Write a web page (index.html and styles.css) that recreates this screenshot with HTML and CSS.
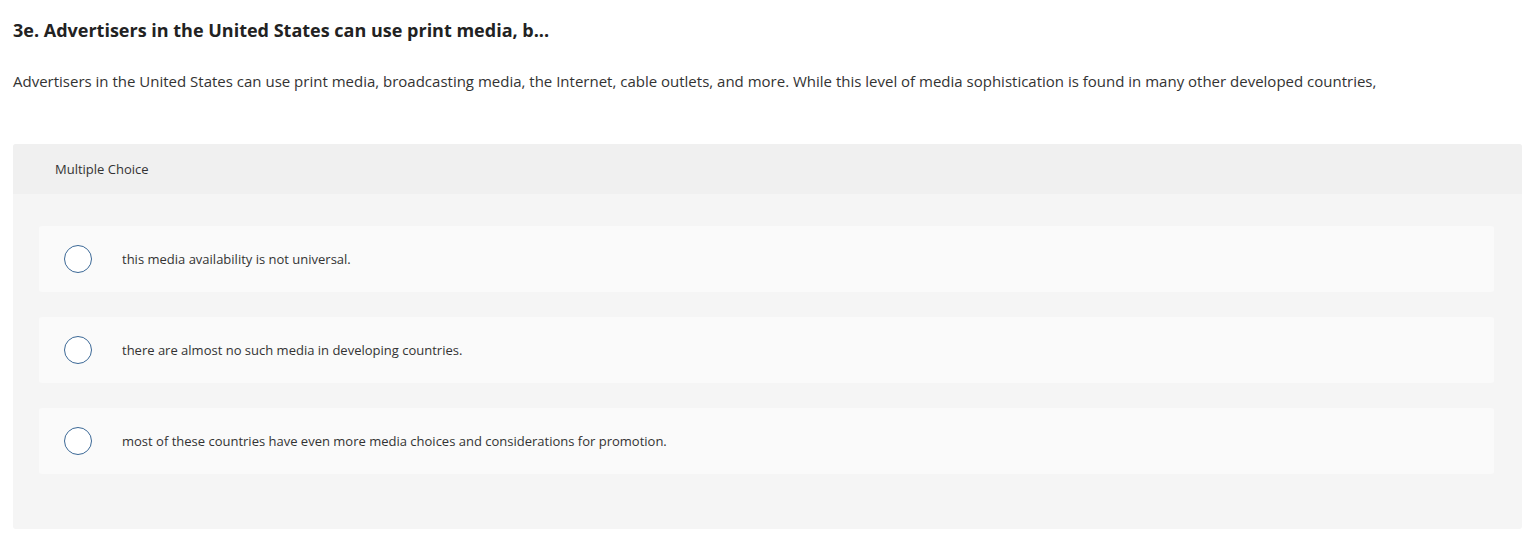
FILE: index.html
```html
<!DOCTYPE html>
<html lang="en">
<head>
    <meta charset="UTF-8">
    <meta name="viewport" content="width=device-width, initial-scale=1.0">
    <title>Question 3e</title>
    <link rel="stylesheet" href="styles.css">
</head>
<body>
    <div class="question">
        <h2 class="title">3e. Advertisers in the United States can use print media, b...</h2>
        <p class="prompt">Advertisers in the United States can use print media, broadcasting media, the Internet, cable outlets, and more. While this level of media sophistication is found in many other developed countries,</p>

        <div class="panel">
            <div class="panel-head">Multiple Choice</div>
            <div class="panel-body">
                <div class="option">
                    <span class="radio"></span>
                    <span class="label">this media availability is not universal.</span>
                </div>
                <div class="option">
                    <span class="radio"></span>
                    <span class="label">there are almost no such media in developing countries.</span>
                </div>
                <div class="option">
                    <span class="radio"></span>
                    <span class="label">most of these countries have even more media choices and considerations for promotion.</span>
                </div>
            </div>
        </div>
    </div>
</body>
</html>
```

FILE: styles.css
```css
* {
    box-sizing: border-box;
}
body {
    margin: 0;
    background: #fff;
    font-family: "Open Sans", Lato, sans-serif;
    color: #333;
}
.question {
    padding: 0 9px 0 13px;
}
.title {
    margin: 0;
    padding-top: 19px;
    font-size: 18px;
    font-weight: 700;
    line-height: 22px;
    color: #222;
}
.prompt {
    margin: 0;
    padding-top: 30px;
    font-size: 15px;
    line-height: 20px;
    color: #333;
}
.panel {
    margin-top: 53px;
    border-radius: 3px;
    overflow: hidden;
    background: #f5f5f5;
}
.panel-head {
    height: 50px;
    padding-left: 42px;
    display: flex;
    align-items: center;
    background: #f0f0f0;
    font-size: 13px;
    color: #333;
}
.panel-body {
    padding: 32px 28px 55px 26px;
    display: flex;
    flex-direction: column;
    gap: 25px;
}
.option {
    height: 66px;
    padding-left: 25px;
    display: flex;
    align-items: center;
    background: #fafafa;
    border-radius: 3px;
}
.radio {
    width: 28px;
    height: 28px;
    border: 1.5px solid #3b6896;
    border-radius: 50%;
    background: #fff;
    flex-shrink: 0;
}
.label {
    margin-left: 30px;
    font-size: 13px;
    color: #333;
}
```
